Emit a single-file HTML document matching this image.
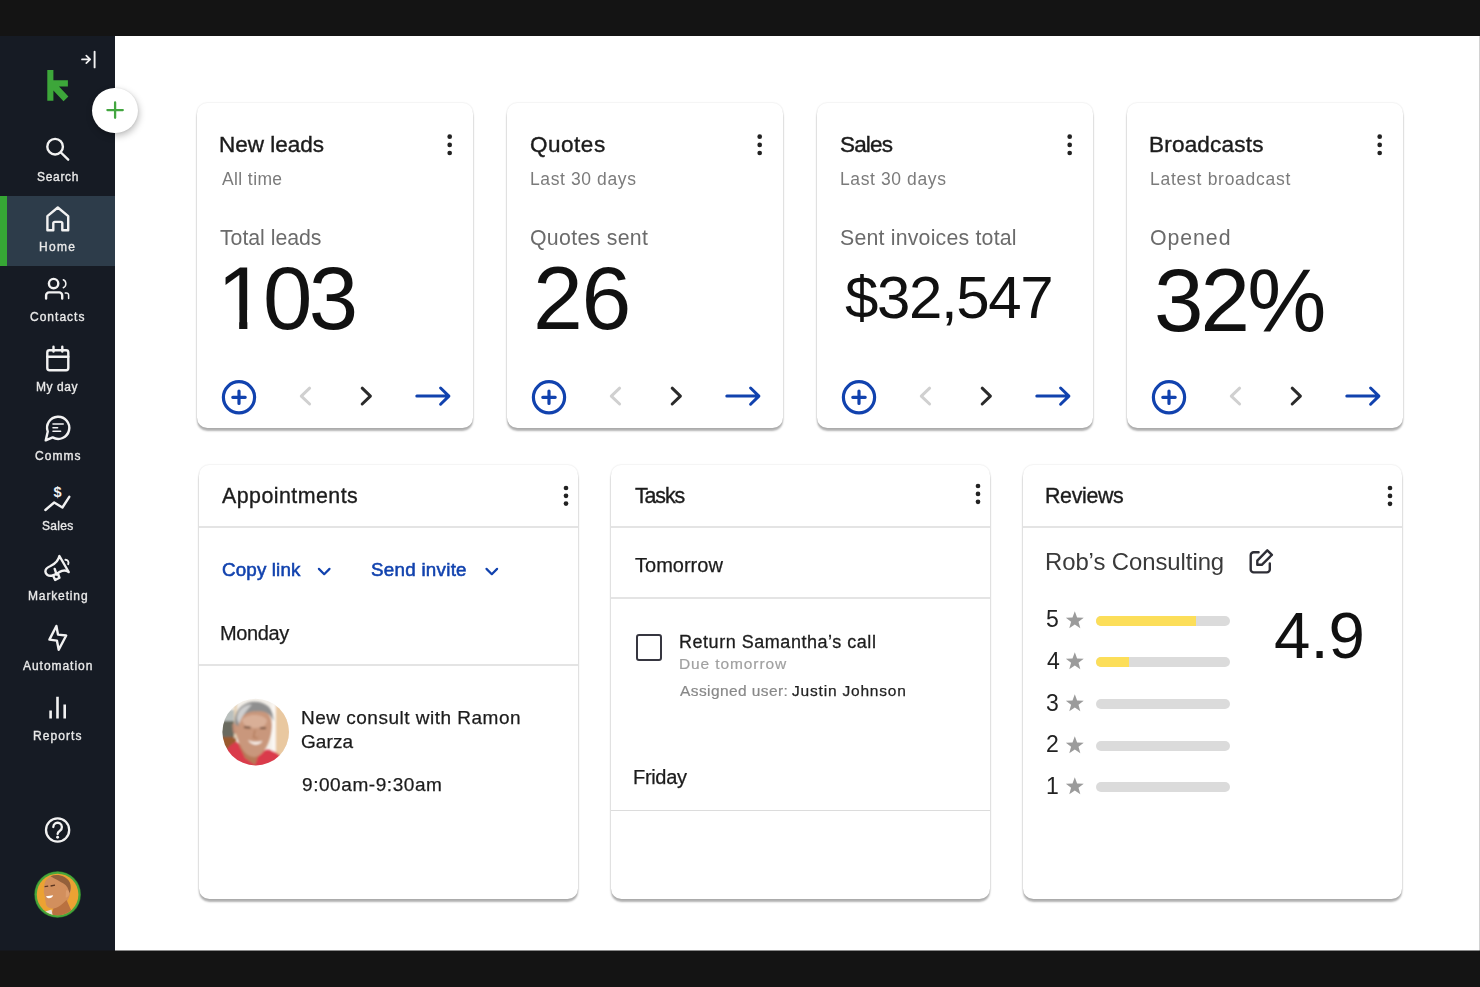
<!DOCTYPE html>
<html lang="en"><head><meta charset="utf-8"><title>Dashboard</title>
<style>
*{box-sizing:border-box;margin:0;padding:0}
html,body{width:1480px;height:987px;overflow:hidden;background:#fff}
body{position:relative;font-family:"Liberation Sans",sans-serif;color:#1a1a1a}
.abs,.t,svg.i{position:absolute}
.t{white-space:nowrap;will-change:transform;font-weight:400;display:block}
.one{display:inline-block;clip-path:polygon(0 -10%,100% -10%,100% 62%,.342em 62%,.342em 120%,.2495em 120%,.2495em 62%,0 62%)}
svg.i{overflow:visible}
.topbar{left:0;top:0;width:1480px;height:35.5px;background:#141414}
.botbar{left:0;top:951px;width:1480px;height:37px;background:#141414}
.side{left:0;top:35px;width:115px;height:916px;background:#161b24}
.redge{left:1479px;top:36px;width:1px;height:915px;background:#d2d2d2}
.bothalf{left:0;top:950px;width:1480px;height:1px;background:rgba(20,20,20,.5)}
.active{left:0;top:196.2px;width:115px;height:69.8px;background:#2d3c4a}
.active i{position:absolute;left:0;top:0;width:7.3px;height:100%;background:#36a635}
.fab{left:92.4px;top:87.5px;width:45.6px;height:45.6px;border-radius:50%;background:#fff;box-shadow:1px 3px 7px rgba(0,0,0,.26),0 0 2px rgba(0,0,0,.10)}
.card{border-radius:10.5px;background:#fff;box-shadow:0 3px 2px rgba(0,0,0,.30),0 0 0 1px rgba(0,0,0,.025),0 0 2.5px rgba(0,0,0,.06)}
.hr{height:2px;background:#e4e4e4}
.hr1{height:1px;background:#dcdcdc}
.cb{border:2px solid #363640;border-radius:3px;background:#fff}
.bar{height:10.2px;border-radius:5.1px;background:#dbdbdb;overflow:hidden}
.bar i{display:block;height:100%;background:#fcde59}
</style></head>
<body>
<aside>
<div class="abs side"></div>
<div class="abs active"><i></i></div>
<svg class="i" style="left:78px;top:48px" width="22" height="24" viewBox="78 48 22 24" ><g fill="none" stroke="#f2f2f2" stroke-width="1.7" stroke-linecap="round" stroke-linejoin="round"><path d="M82 59.4H90M86.3 55.7 90.2 59.4 86.3 63.1"/><path d="M94.6 51.8V67.4" stroke-width="1.9"/></g></svg>
<svg class="i" style="left:44px;top:66px" width="28" height="38" viewBox="44 66 28 38" ><path fill="#3da63a" d="M47.3 69.9H53.4V80.2H67.9V86.5H59L68.4 96.6 63.5 101.3 53.4 90.6V100.7H47.3Z"/></svg>
<div class="abs fab"></div>
<svg class="i" style="left:100px;top:95px" width="30" height="30" viewBox="100 95 30 30" ><path d="M107.4 110.1H122.8M115.1 102.4V117.8" fill="none" stroke="#43a640" stroke-width="2.3" stroke-linecap="round"/></svg>
<nav>
<a>
<svg class="i" style="left:43px;top:134px" width="30" height="30" viewBox="43 134 30 30" ><g fill="none" stroke="#f2f2f2" stroke-width="2.4" stroke-linecap="round" stroke-linejoin="round"><circle cx="55.1" cy="146.7" r="7.8"/><path d="M60.9 152.5 68.2 159.7"/></g></svg>
<span class="t " style="left:37.00px;top:171.02px;font-size:12px;line-height:12px;color:#e9e9e9;letter-spacing:0.683px;-webkit-text-stroke:0.35px #e9e9e9;">Search</span>
</a>
<a>
<svg class="i" style="left:44px;top:204px" width="28" height="30" viewBox="44 204 28 30" ><g fill="none" stroke="#f2f2f2" stroke-width="2.4" stroke-linecap="round" stroke-linejoin="round"><path d="M47.4 216.2 57.8 207.5 68.2 216.2V230.2H62.3V223.3a1.4 1.4 0 0 0-1.4-1.4H54.7a1.4 1.4 0 0 0-1.4 1.4V230.2H47.4Z"/></g></svg>
<span class="t " style="left:39.46px;top:241.03px;font-size:12px;line-height:12px;color:#e9e9e9;letter-spacing:1.271px;-webkit-text-stroke:0.35px #e9e9e9;">Home</span>
</a>
<a>
<svg class="i" style="left:43px;top:275px" width="30" height="26" viewBox="43 275 30 26" ><g fill="none" stroke="#f2f2f2" stroke-width="2.4" stroke-linecap="round" stroke-linejoin="round"><circle cx="53.6" cy="283.6" r="4.7"/><path d="M46.1 298.6V295.4a3 3 0 0 1 3-3H59.2a3 3 0 0 1 3 3V298.6"/><path d="M63.3 279.8a4.4 4.4 0 0 1 0 8" stroke-width="1.5"/><path d="M65.2 292.9H66.4a2.2 2.2 0 0 1 2.2 2.2V298.6" stroke-width="1.5"/></g></svg>
<span class="t " style="left:30.29px;top:311.03px;font-size:12px;line-height:12px;color:#e9e9e9;letter-spacing:1.012px;-webkit-text-stroke:0.35px #e9e9e9;">Contacts</span>
</a>
<a>
<svg class="i" style="left:44px;top:344px" width="28" height="30" viewBox="44 344 28 30" ><g fill="none" stroke="#f2f2f2" stroke-width="2.4" stroke-linecap="round" stroke-linejoin="round"><rect x="47.3" y="350.2" width="21" height="20.1" rx="2.2"/><path d="M47.3 356.8H68.3M53.5 346.8V351.6M62.3 346.8V351.6"/></g></svg>
<span class="t " style="left:36.36px;top:381.03px;font-size:12px;line-height:12px;color:#e9e9e9;letter-spacing:0.572px;-webkit-text-stroke:0.35px #e9e9e9;">My day</span>
</a>
<a>
<svg class="i" style="left:43px;top:413px" width="30" height="30" viewBox="43 413 30 30" ><g fill="none" stroke="#f2f2f2" stroke-width="2.4" stroke-linecap="round" stroke-linejoin="round"><path d="M52.65 437.41A11.1 11.1 0 1 0 47.77 431.6L45.7 440.4Z"/><path d="M53 424H63.2M53 427.7H57.6M53 431.3H60.6" stroke-width="1.6"/></g></svg>
<span class="t " style="left:34.74px;top:450.03px;font-size:12px;line-height:12px;color:#e9e9e9;letter-spacing:1.051px;-webkit-text-stroke:0.35px #e9e9e9;">Comms</span>
</a>
<a>
<svg class="i" style="left:43px;top:483px" width="30" height="30" viewBox="43 483 30 30" ><g fill="none" stroke="#f2f2f2" stroke-width="2.4" stroke-linecap="round" stroke-linejoin="round"><path d="M45.4 510 54.2 502.5 62.4 507.5 69.3 496.8"/></g><text x="57.6" y="497.2" text-anchor="middle" font-family="Liberation Sans, sans-serif" font-weight="700" font-size="14.5" fill="#f2f2f2">$</text></svg>
<span class="t " style="left:41.85px;top:520.03px;font-size:12px;line-height:12px;color:#e9e9e9;letter-spacing:0.339px;-webkit-text-stroke:0.35px #e9e9e9;">Sales</span>
</a>
<a>
<svg class="i" style="left:43px;top:553px" width="30" height="30" viewBox="43 553 30 30" ><g fill="none" stroke="#f2f2f2" stroke-width="2.4" stroke-linecap="round" stroke-linejoin="round"><path d="M59.4 556C58.5 560.5 55 563.8 50.5 566C47.5 567.3 45.2 569 45.4 571.6C45.6 574.5 48.5 576.2 51.5 575.7C55 575 58.5 572.3 62 570.9C64.5 570 66.8 570.6 68.7 572Z"/><path d="M54.7 568.9 56.6 574.6M53.5 576.4 55.2 580 59.5 577.8 58.1 574"/><path d="M65.4 559.7C67.6 559.8 69.2 561.6 68.2 564.2" stroke-width="1.9"/></g></svg>
<span class="t " style="left:27.71px;top:590.04px;font-size:12px;line-height:12px;color:#e9e9e9;letter-spacing:0.861px;-webkit-text-stroke:0.35px #e9e9e9;">Marketing</span>
</a>
<a>
<svg class="i" style="left:46px;top:623px" width="24" height="30" viewBox="46 623 24 30" ><g fill="none" stroke="#f2f2f2" stroke-width="2.4" stroke-linecap="round" stroke-linejoin="round"><path d="M56.4 626 49.4 639.6 56.9 640.6 58.7 649.8 66.2 635.5 58 634.6Z"/></g></svg>
<span class="t " style="left:23.30px;top:660.02px;font-size:12px;line-height:12px;color:#e9e9e9;letter-spacing:0.959px;-webkit-text-stroke:0.35px #e9e9e9;">Automation</span>
</a>
<a>
<svg class="i" style="left:46px;top:694px" width="24" height="28" viewBox="46 694 24 28" ><path d="M50.6 710.6V718.6M57.5 696.8V718.6M64.7 704.6V718.6" fill="none" stroke="#f2f2f2" stroke-width="2.6"/></svg>
<span class="t " style="left:33.11px;top:730.02px;font-size:12px;line-height:12px;color:#e9e9e9;letter-spacing:1.066px;-webkit-text-stroke:0.35px #e9e9e9;">Reports</span>
</a>
</nav>
<svg class="i" style="left:43px;top:816px" width="30" height="30" viewBox="43 816 30 30" ><g fill="none" stroke="#f2f2f2" stroke-width="2.3" stroke-linecap="round" stroke-linejoin="round"><circle cx="57.6" cy="830" r="11.6"/><path d="M53.3 827a4.3 4.3 0 1 1 6.6 3.7c-1.6 1-2.3 1.8-2.3 3.3"/></g><circle cx="57.6" cy="837.2" r="1.45" fill="#f2f2f2"/></svg>
<svg class="i" style="left:33px;top:870px" width="50" height="50" viewBox="33 870 50 50" ><defs><clipPath id="av1"><circle cx="57.6" cy="894.5" r="20.8"/></clipPath><filter id="bl1" x="-10%" y="-10%" width="120%" height="120%"><feGaussianBlur stdDeviation="0.75"/></filter></defs>
<circle cx="57.6" cy="894.5" r="23.3" fill="#2f7f2b"/><circle cx="57.6" cy="894.5" r="22.7" fill="#49a73b"/>
<g clip-path="url(#av1)"><rect x="34" y="871" width="48" height="48" fill="#eca233"/>
<g filter="url(#bl1)">
<path d="M44.2 886C44.5 879 50 874.8 57 875.2C65 875.6 70.8 881 70.6 889C70.5 894 69 898 67.2 901L70.5 909 74 914 60 920 50 919 53.5 908.5C50 908.5 47 907.5 46 904.5L45 898 43.8 892Z" fill="#d28f5d"/>
<path d="M50.5 876.2C57 873.6 66 875.5 69.6 882C71.4 886 70.8 890.5 69.4 893.5C68.6 889 67 885.5 63.5 883.5C60 881.5 55 878.8 50.5 876.2Z" fill="#93603b"/>
<path d="M66 890.5C68.5 889.5 70 892 69 895C68.3 897 66.8 898 65.6 897.3Z" fill="#dc9c6c"/>
<path d="M53.5 908.5C57 908 62 905 66.5 900L70.5 909 74 914 60 920 50 919Z" fill="#b9713f"/>
<path d="M46 896.2C48.5 895.6 51 895.6 53.2 895.2C52.6 897.4 50.5 898.4 48.5 898.2C47.3 898 46.4 897.2 46 896.2Z" fill="#fff"/>
<path d="M44.6 886.6L48.2 886.2M50.6 886 55 885.2" stroke="#5b3620" stroke-width="1.3" fill="none"/>
<path d="M44 920 45.5 911.5 51.5 909.5 53.5 920Z" fill="#e8e2d6"/>
</g></g></svg>
</aside>
<main>
<section>
<div class="abs card" style="left:197px;top:103px;width:276.4px;height:325.4px"></div>
<h2 class="t " style="left:219.04px;top:134.03px;font-size:22.5px;line-height:22.5px;color:#1c1c1c;-webkit-text-stroke:0.4px #1c1c1c;">New leads</h2>
<p class="t " style="left:221.80px;top:171.03px;font-size:17.5px;line-height:17.5px;color:#7b7b7b;letter-spacing:0.391px;">All time</p>
<p class="t " style="left:220.47px;top:228.02px;font-size:21.3px;line-height:21.3px;color:#6b6b6b;letter-spacing:-0.033px;">Total leads</p>
<p class="t " style="left:216.85px;top:255.03px;font-size:88.8px;line-height:88.8px;color:#111;letter-spacing:-3.505px;"><span class="one">1</span>03</p>
<svg class="i" style="left:440px;top:130px" width="18" height="30" viewBox="440 130 18 30" ><g fill="#222"><circle cx="449.7" cy="136.7" r="2.35"/><circle cx="449.7" cy="144.9" r="2.35"/><circle cx="449.7" cy="153.0" r="2.35"/></g></svg>
<svg class="i" style="left:218px;top:376px" width="240" height="42" viewBox="218 376 240 42" ><g fill="none" stroke-linecap="round" stroke-linejoin="round"><g stroke="#1142ae" stroke-width="3.2"><circle cx="239.0" cy="397.3" r="15.6"/><path d="M232.8 397.3H245.2M239.0 391.1V403.5"/></g><path d="M309.6 388.2 301.3 396.1 309.6 404" stroke="#d0d0d0" stroke-width="3"/><path d="M362.2 388.2 370.4 396.1 362.2 404" stroke="#2b2b2b" stroke-width="3"/><path d="M416.8 396.1H448.6M440.6 388 448.9 396.1 440.6 404.2" stroke="#1142ae" stroke-width="3"/></g></svg>
</section>
<section>
<div class="abs card" style="left:507px;top:103px;width:276.4px;height:325.4px"></div>
<h2 class="t " style="left:529.75px;top:134.03px;font-size:22.5px;line-height:22.5px;color:#1c1c1c;letter-spacing:0.523px;-webkit-text-stroke:0.4px #1c1c1c;">Quotes</h2>
<p class="t " style="left:530.43px;top:171.03px;font-size:17.5px;line-height:17.5px;color:#7b7b7b;letter-spacing:0.607px;">Last 30 days</p>
<p class="t " style="left:529.80px;top:228.02px;font-size:21.3px;line-height:21.3px;color:#6b6b6b;letter-spacing:0.307px;">Quotes sent</p>
<p class="t " style="left:532.70px;top:254.03px;font-size:89.6px;line-height:89.6px;color:#111;letter-spacing:-1.431px;">26</p>
<svg class="i" style="left:750px;top:130px" width="18" height="30" viewBox="750 130 18 30" ><g fill="#222"><circle cx="759.7" cy="136.7" r="2.35"/><circle cx="759.7" cy="144.9" r="2.35"/><circle cx="759.7" cy="153.0" r="2.35"/></g></svg>
<svg class="i" style="left:528px;top:376px" width="240" height="42" viewBox="528 376 240 42" ><g fill="none" stroke-linecap="round" stroke-linejoin="round"><g stroke="#1142ae" stroke-width="3.2"><circle cx="549.0" cy="397.3" r="15.6"/><path d="M542.8 397.3H555.2M549.0 391.1V403.5"/></g><path d="M619.6 388.2 611.3 396.1 619.6 404" stroke="#d0d0d0" stroke-width="3"/><path d="M672.2 388.2 680.4 396.1 672.2 404" stroke="#2b2b2b" stroke-width="3"/><path d="M726.8 396.1H758.6M750.6 388 758.9 396.1 750.6 404.2" stroke="#1142ae" stroke-width="3"/></g></svg>
</section>
<section>
<div class="abs card" style="left:817px;top:103px;width:276.4px;height:325.4px"></div>
<h2 class="t " style="left:840.10px;top:134.03px;font-size:22.5px;line-height:22.5px;color:#1c1c1c;letter-spacing:-0.844px;-webkit-text-stroke:0.4px #1c1c1c;">Sales</h2>
<p class="t " style="left:840.43px;top:171.03px;font-size:17.5px;line-height:17.5px;color:#7b7b7b;letter-spacing:0.607px;">Last 30 days</p>
<p class="t " style="left:840.13px;top:228.02px;font-size:21.3px;line-height:21.3px;color:#6b6b6b;letter-spacing:0.206px;">Sent invoices total</p>
<p class="t " style="left:844.90px;top:268.02px;font-size:60px;line-height:60px;color:#111;letter-spacing:-1.376px;">$32,547</p>
<svg class="i" style="left:1060px;top:130px" width="18" height="30" viewBox="1060 130 18 30" ><g fill="#222"><circle cx="1069.7" cy="136.7" r="2.35"/><circle cx="1069.7" cy="144.9" r="2.35"/><circle cx="1069.7" cy="153.0" r="2.35"/></g></svg>
<svg class="i" style="left:838px;top:376px" width="240" height="42" viewBox="838 376 240 42" ><g fill="none" stroke-linecap="round" stroke-linejoin="round"><g stroke="#1142ae" stroke-width="3.2"><circle cx="859.0" cy="397.3" r="15.6"/><path d="M852.8 397.3H865.2M859.0 391.1V403.5"/></g><path d="M929.6 388.2 921.3 396.1 929.6 404" stroke="#d0d0d0" stroke-width="3"/><path d="M982.2 388.2 990.4 396.1 982.2 404" stroke="#2b2b2b" stroke-width="3"/><path d="M1036.8 396.1H1068.6M1060.6 388 1068.9 396.1 1060.6 404.2" stroke="#1142ae" stroke-width="3"/></g></svg>
</section>
<section>
<div class="abs card" style="left:1127px;top:103px;width:276.4px;height:325.4px"></div>
<h2 class="t " style="left:1149.04px;top:134.03px;font-size:22.5px;line-height:22.5px;color:#1c1c1c;letter-spacing:0.212px;-webkit-text-stroke:0.4px #1c1c1c;">Broadcasts</h2>
<p class="t " style="left:1150.43px;top:171.03px;font-size:17.5px;line-height:17.5px;color:#7b7b7b;letter-spacing:0.728px;">Latest broadcast</p>
<p class="t " style="left:1149.80px;top:228.02px;font-size:21.3px;line-height:21.3px;color:#6b6b6b;letter-spacing:0.939px;">Opened</p>
<p class="t " style="left:1154.12px;top:256.03px;font-size:89px;line-height:89px;color:#111;letter-spacing:-2.899px;">32%</p>
<svg class="i" style="left:1370px;top:130px" width="18" height="30" viewBox="1370 130 18 30" ><g fill="#222"><circle cx="1379.7" cy="136.7" r="2.35"/><circle cx="1379.7" cy="144.9" r="2.35"/><circle cx="1379.7" cy="153.0" r="2.35"/></g></svg>
<svg class="i" style="left:1148px;top:376px" width="240" height="42" viewBox="1148 376 240 42" ><g fill="none" stroke-linecap="round" stroke-linejoin="round"><g stroke="#1142ae" stroke-width="3.2"><circle cx="1169.0" cy="397.3" r="15.6"/><path d="M1162.8 397.3H1175.2M1169.0 391.1V403.5"/></g><path d="M1239.6 388.2 1231.3 396.1 1239.6 404" stroke="#d0d0d0" stroke-width="3"/><path d="M1292.2 388.2 1300.4 396.1 1292.2 404" stroke="#2b2b2b" stroke-width="3"/><path d="M1346.8 396.1H1378.6M1370.6 388 1378.9 396.1 1370.6 404.2" stroke="#1142ae" stroke-width="3"/></g></svg>
</section>
<section>
<div class="abs card" style="left:199.4px;top:464.6px;width:378.8px;height:434.6px"></div>
<h2 class="t " style="left:221.90px;top:486.03px;font-size:21.4px;line-height:21.4px;color:#1c1c1c;letter-spacing:0.447px;-webkit-text-stroke:0.35px #1c1c1c;">Appointments</h2>
<svg class="i" style="left:558.3px;top:479.8px" width="16" height="34" viewBox="558.3 479.8 16 34" ><g fill="#222"><circle cx="566.3" cy="487.8" r="2.35"/><circle cx="566.3" cy="495.6" r="2.35"/><circle cx="566.3" cy="503.4" r="2.35"/></g></svg>
<div class="abs hr" style="left:199.4px;top:526.2px;width:378.8px"></div>
<a class="t " style="left:221.92px;top:561.02px;font-size:18.8px;line-height:18.8px;color:#1142ae;letter-spacing:0.146px;-webkit-text-stroke:0.55px #1142ae;">Copy link</a>
<a class="t " style="left:370.81px;top:561.02px;font-size:18.8px;line-height:18.8px;color:#1142ae;letter-spacing:0.263px;-webkit-text-stroke:0.55px #1142ae;">Send invite</a>
<svg class="i" style="left:314px;top:564px" width="190" height="16" viewBox="314 564 190 16" ><g fill="none" stroke="#1142ae" stroke-width="2.2" stroke-linecap="round" stroke-linejoin="round"><path d="M318.9 568.9 324.2 574.2 329.5 568.9"/><path d="M486.5 568.9 491.8 574.2 497.1 568.9"/></g></svg>
<h3 class="t " style="left:220.34px;top:623.03px;font-size:20px;line-height:20px;color:#1c1c1c;letter-spacing:-0.398px;-webkit-text-stroke:0.25px #1c1c1c;">Monday</h3>
<div class="abs hr" style="left:199.4px;top:664.3px;width:378.8px"></div>
<div class="t " style="left:300.72px;top:708.03px;font-size:19px;line-height:19px;color:#1c1c1c;letter-spacing:0.498px;-webkit-text-stroke:0.25px #1c1c1c;">New consult with Ramon</div>
<div class="t " style="left:301.31px;top:732.02px;font-size:19px;line-height:19px;color:#1c1c1c;letter-spacing:0.083px;-webkit-text-stroke:0.25px #1c1c1c;">Garza</div>
<div class="t " style="left:302.11px;top:775.02px;font-size:19px;line-height:19px;color:#1c1c1c;letter-spacing:0.567px;-webkit-text-stroke:0.25px #1c1c1c;">9:00am-9:30am</div>
<svg class="i" style="left:220px;top:697px" width="72" height="72" viewBox="220 697 72 72" ><defs><clipPath id="av2"><circle cx="255.7" cy="732.1" r="33.3"/></clipPath><filter id="bl2" x="-10%" y="-10%" width="120%" height="120%"><feGaussianBlur stdDeviation="0.9"/></filter></defs>
<g clip-path="url(#av2)"><g transform="translate(215 692)"><rect x="0" y="0" width="80" height="80" fill="#f3efe9"/>
<g filter="url(#bl2)">
<rect x="4" y="18" width="15.5" height="14" fill="#b9bfbd"/><rect x="4" y="29" width="15.5" height="17" fill="#6b6a5e"/><rect x="4" y="45" width="17" height="16" fill="#9a5a2e"/>
<rect x="19" y="6" width="3" height="40" fill="#e6d3b8"/>
<rect x="60.5" y="6" width="16" height="62" fill="#e9c8a0"/><rect x="57" y="6" width="3.6" height="62" fill="#fbf8f4"/>
<path d="M10 60C14 54 18 50.5 21.5 50L33 58 46 60 52 57.5C57 58 61 60 65 63.5L64 82H10Z" fill="#da3a4c"/>
<path d="M23 51 30 66 40 73 44 62 47 55 34 58Z" fill="#b67a58"/>
<path d="M19.6 33C20 22 28 15.5 38 15.5C49 15.5 57.5 22 57 34C56.5 46 50 64.5 39.5 65C29 65.5 21.5 50 19.6 33Z" fill="#c9977b"/>
<path d="M27 28C30 24 36 22.5 41 23C46 23.5 50 25 52 28C52 33 47 36 40 36C33 36 28 33 27 28Z" fill="#dcb39c" opacity=".85"/>
<path d="M17.5 33C17.8 31 19.5 31 20 33L21.5 42C19.8 42.5 18.4 41 18 38.5Z" fill="#c39078"/>
<path d="M20 32C18.5 19 28 9.6 40 9.7C51 9.8 59.5 17 58.3 29C56.5 23 52 19.5 45 19.2C37 18.8 30 20 26 26C24 29 23.5 31.5 23.4 34.5Z" fill="#8f8f8f"/>
<path d="M22 27C22 18 29 12.5 37 12.5C34 16 31 19 28.5 23C26.5 26 25 29 24 32Z" fill="#cfcfcf"/>
<path d="M29 35.2 35.5 35.6M45 36.3 51 36.2" stroke="#5a3a2a" stroke-width="1.6" fill="none"/>
<path d="M40 38 38.5 45.5 43 46" stroke="#b07858" stroke-width="1.2" fill="none"/>
<path d="M33 48C37 50 43 50.6 47.5 48.8C46 52 42 53.2 39 52.5C36 51.8 34.2 50.3 33 48Z" fill="#f7efe9"/>
</g></g></g></svg>
</section>
<section>
<div class="abs card" style="left:611.4px;top:464.6px;width:378.8px;height:434.6px"></div>
<h2 class="t " style="left:634.77px;top:486.03px;font-size:21.4px;line-height:21.4px;color:#1c1c1c;letter-spacing:-1.125px;-webkit-text-stroke:0.35px #1c1c1c;">Tasks</h2>
<svg class="i" style="left:970px;top:478.3px" width="16" height="34" viewBox="970 478.3 16 34" ><g fill="#222"><circle cx="978" cy="486.3" r="2.35"/><circle cx="978" cy="494.2" r="2.35"/><circle cx="978" cy="502.1" r="2.35"/></g></svg>
<div class="abs hr" style="left:611.4px;top:526.2px;width:378.8px"></div>
<h3 class="t " style="left:634.79px;top:555.03px;font-size:20px;line-height:20px;color:#1c1c1c;letter-spacing:0.011px;-webkit-text-stroke:0.25px #1c1c1c;">Tomorrow</h3>
<div class="abs hr" style="left:611.4px;top:597.2px;width:378.8px"></div>
<div class="abs cb" role="checkbox" aria-checked="false" style="left:635.6px;top:634.2px;width:26.6px;height:26.4px"></div>
<div class="t " style="left:678.59px;top:633.03px;font-size:18px;line-height:18px;color:#1c1c1c;letter-spacing:0.530px;-webkit-text-stroke:0.3px #1c1c1c;">Return Samantha’s call</div>
<div class="t " style="left:679.25px;top:656.03px;font-size:15.5px;line-height:15.5px;color:#a0a0a0;letter-spacing:0.896px;-webkit-text-stroke:0.2px #a0a0a0;">Due tomorrow</div>
<div class="t " style="left:680.00px;top:683.03px;font-size:15.5px;line-height:15.5px;color:#888;letter-spacing:0.411px;-webkit-text-stroke:0.2px #888;">Assigned user:</div>
<div class="t " style="left:791.71px;top:683.03px;font-size:15.5px;line-height:15.5px;color:#222;letter-spacing:0.806px;-webkit-text-stroke:0.25px #222;">Justin Johnson</div>
<h3 class="t " style="left:633.04px;top:767.03px;font-size:20px;line-height:20px;color:#1c1c1c;letter-spacing:-0.321px;-webkit-text-stroke:0.25px #1c1c1c;">Friday</h3>
<div class="abs hr1" style="left:611.4px;top:809.8px;width:378.8px"></div>
</section>
<section>
<div class="abs card" style="left:1023px;top:464.6px;width:379px;height:434.6px"></div>
<h2 class="t " style="left:1045.33px;top:486.03px;font-size:21.4px;line-height:21.4px;color:#1c1c1c;letter-spacing:-0.338px;-webkit-text-stroke:0.35px #1c1c1c;">Reviews</h2>
<svg class="i" style="left:1381.9px;top:479.7px" width="16" height="34" viewBox="1381.9 479.7 16 34" ><g fill="#222"><circle cx="1389.9" cy="487.7" r="2.35"/><circle cx="1389.9" cy="495.6" r="2.35"/><circle cx="1389.9" cy="503.5" r="2.35"/></g></svg>
<div class="abs hr" style="left:1023px;top:526.2px;width:379px"></div>
<h3 class="t " style="left:1045.13px;top:550.02px;font-size:23.9px;line-height:23.9px;color:#3a3a3a;letter-spacing:-0.069px;">Rob’s Consulting</h3>
<svg class="i" style="left:1246px;top:546px" width="30" height="30" viewBox="1246 546 30 30" ><g fill="none" stroke="#2e2e36" stroke-width="2.4" stroke-linecap="round" stroke-linejoin="round"><path d="M1258.6 552.2H1253.7a3 3 0 0 0-3 3V569.4a3 3 0 0 0 3 3H1266.8a3 3 0 0 0 3-3V563.4"/><path d="M1257.3 560.6 1267.3 550.3 1271.9 554.8 1261.8 564.8H1257.3Z"/></g></svg>
<div class="t " style="left:1046.28px;top:608.03px;font-size:23px;line-height:23px;color:#222;">5</div>
<svg class="i" style="left:1064px;top:608.6px" width="22" height="22" viewBox="1064 608.6 22 22" ><polygon points="1074.80,610.80 1077.09,617.04 1083.74,617.30 1078.51,621.41 1080.33,627.80 1074.80,624.10 1069.27,627.80 1071.09,621.41 1065.86,617.30 1072.51,617.04" fill="#9b9b9b"/></svg>
<div class="abs bar" style="left:1096px;top:615.5px;width:133.6px"><i style="width:99.5px"></i></div>
<div class="t " style="left:1046.64px;top:650.03px;font-size:23px;line-height:23px;color:#222;">4</div>
<svg class="i" style="left:1064px;top:650.3000000000001px" width="22" height="22" viewBox="1064 650.3000000000001 22 22" ><polygon points="1074.80,652.50 1077.09,658.74 1083.74,659.00 1078.51,663.11 1080.33,669.50 1074.80,665.80 1069.27,669.50 1071.09,663.11 1065.86,659.00 1072.51,658.74" fill="#9b9b9b"/></svg>
<div class="abs bar" style="left:1096px;top:657.2px;width:133.6px"><i style="width:33.4px"></i></div>
<div class="t " style="left:1046.28px;top:692.03px;font-size:23px;line-height:23px;color:#222;">3</div>
<svg class="i" style="left:1064px;top:692.0px" width="22" height="22" viewBox="1064 692.0 22 22" ><polygon points="1074.80,694.20 1077.09,700.44 1083.74,700.70 1078.51,704.81 1080.33,711.20 1074.80,707.50 1069.27,711.20 1071.09,704.81 1065.86,700.70 1072.51,700.44" fill="#9b9b9b"/></svg>
<div class="abs bar" style="left:1096px;top:698.9px;width:133.6px"><i style="width:0.0px"></i></div>
<div class="t " style="left:1045.92px;top:733.02px;font-size:23px;line-height:23px;color:#222;">2</div>
<svg class="i" style="left:1064px;top:733.7px" width="22" height="22" viewBox="1064 733.7 22 22" ><polygon points="1074.80,735.90 1077.09,742.14 1083.74,742.40 1078.51,746.51 1080.33,752.90 1074.80,749.20 1069.27,752.90 1071.09,746.51 1065.86,742.40 1072.51,742.14" fill="#9b9b9b"/></svg>
<div class="abs bar" style="left:1096px;top:740.6px;width:133.6px"><i style="width:0.0px"></i></div>
<div class="t " style="left:1045.56px;top:775.03px;font-size:23px;line-height:23px;color:#222;">1</div>
<svg class="i" style="left:1064px;top:775.4000000000001px" width="22" height="22" viewBox="1064 775.4000000000001 22 22" ><polygon points="1074.80,777.60 1077.09,783.84 1083.74,784.10 1078.51,788.21 1080.33,794.60 1074.80,790.90 1069.27,794.60 1071.09,788.21 1065.86,784.10 1072.51,783.84" fill="#9b9b9b"/></svg>
<div class="abs bar" style="left:1096px;top:782.3px;width:133.6px"><i style="width:0.0px"></i></div>
<div class="t " style="left:1274.38px;top:603.03px;font-size:65.4px;line-height:65.4px;color:#111;letter-spacing:0.029px;">4.9</div>
</section>
</main>
<div class="abs redge"></div>
<div class="abs bothalf"></div>
<div class="abs topbar"></div>
<div class="abs botbar"></div>
</body></html>
